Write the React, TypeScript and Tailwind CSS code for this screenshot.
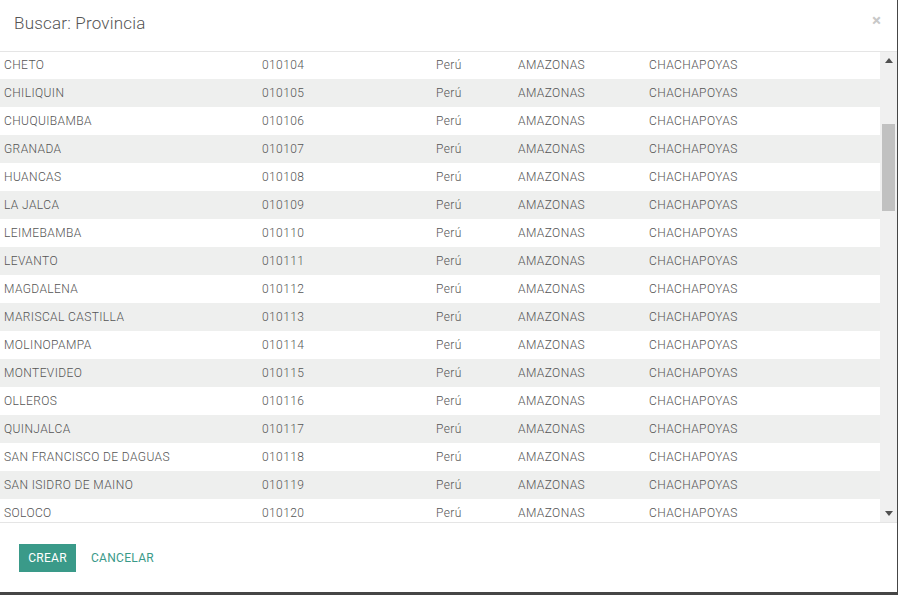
const rows = [
  ['CHETO', '010104'],
  ['CHILIQUIN', '010105'],
  ['CHUQUIBAMBA', '010106'],
  ['GRANADA', '010107'],
  ['HUANCAS', '010108'],
  ['LA JALCA', '010109'],
  ['LEIMEBAMBA', '010110'],
  ['LEVANTO', '010111'],
  ['MAGDALENA', '010112'],
  ['MARISCAL CASTILLA', '010113'],
  ['MOLINOPAMPA', '010114'],
  ['MONTEVIDEO', '010115'],
  ['OLLEROS', '010116'],
  ['QUINJALCA', '010117'],
  ['SAN FRANCISCO DE DAGUAS', '010118'],
  ['SAN ISIDRO DE MAINO', '010119'],
  ['SOLOCO', '010120'],
];

export default function App() {
  return (
    <div className="w-[898px] h-[595px] bg-[#464646] font-['Roboto',sans-serif] overflow-hidden">
      <div className="w-[897px] h-[592px] bg-white flex flex-col">
        {/* Header */}
        <div className="h-[52px] shrink-0 border-b border-[#e5e5e5] flex items-center justify-between pl-[14px] pr-[16px]">
          <h4 className="text-[17px] text-[#555] font-light tracking-[0.2px] leading-none pb-[4px]">Buscar: Provincia</h4>
          <span className="text-[#c8c8c8] text-[17px] font-bold leading-none pb-[10px]">×</span>
        </div>

        {/* List */}
        <div className="h-[471px] shrink-0 flex border-b border-[#e5e5e5]">
          <div className="flex-1 overflow-hidden">
            <div className="-mt-px">
              {rows.map(([name, code], i) => (
                <div
                  key={code}
                  className={`h-[28px] flex items-center text-[12px] font-light tracking-[0.4px] text-[#555] ${i % 2 === 1 ? 'bg-[#eeefee]' : 'bg-white'}`}
                >
                  <span className="w-[262px] pl-[4px]">{name}</span>
                  <span className="w-[174px]">{code}</span>
                  <span className="w-[82px]">Perú</span>
                  <span className="w-[131px]">AMAZONAS</span>
                  <span>CHACHAPOYAS</span>
                </div>
              ))}
            </div>
          </div>
          {/* scrollbar */}
          <div className="w-[17px] bg-[#f0f0f0] flex flex-col items-center">
            <div className="h-[17px] flex items-center justify-center">
              <svg width="8" height="5" viewBox="0 0 8 5"><path d="M0 5 L4 0 L8 5 Z" fill="#505050" /></svg>
            </div>
            <div className="h-[55px]" />
            <div className="w-[13px] h-[87px] bg-[#c1c1c1]" />
            <div className="flex-1" />
            <div className="h-[17px] flex items-center justify-center">
              <svg width="8" height="5" viewBox="0 0 8 5"><path d="M0 0 L8 0 L4 5 Z" fill="#505050" /></svg>
            </div>
          </div>
        </div>

        {/* Footer */}
        <div className="flex items-center gap-[15px] pl-[19px] pt-[21px]">
          <button className="h-[28px] w-[57px] bg-[#3a9a89] text-white text-[12px] tracking-[0.3px]">CREAR</button>
          <button className="text-[#3a9a89] text-[12px] tracking-[0.3px]">CANCELAR</button>
        </div>
      </div>
    </div>
  );
}
